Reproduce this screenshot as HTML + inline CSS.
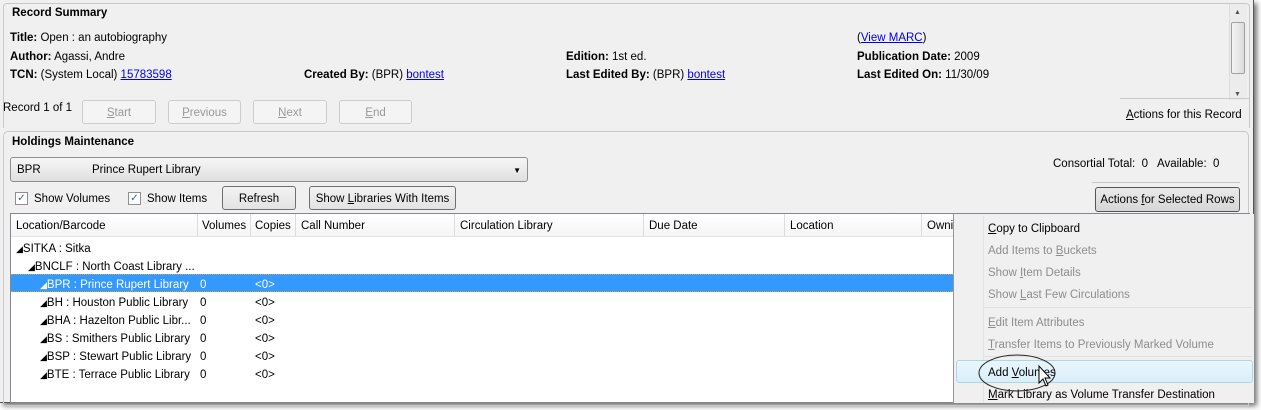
<!DOCTYPE html>
<html><head><style>
*{margin:0;padding:0;box-sizing:border-box}
body{width:1261px;height:410px;background:#fff;position:relative;overflow:hidden;font-family:"Liberation Sans",sans-serif;font-size:11.5px;color:#000}
.a{position:absolute;white-space:nowrap;line-height:17px}
#win{position:absolute;left:0;top:0;width:1254px;height:403px;background:#f0f0f0;box-shadow:3px 3px 5px rgba(0,0,0,.55);border-right:1px solid #555;border-bottom:1px solid #555}
b{font-weight:bold}
a{color:#00e;text-decoration:underline}
.btn{position:absolute;border:1px solid #adadad;border-radius:3px;background:linear-gradient(#f2f2f2,#e3e3e3);text-align:center;line-height:24px}
.dis{color:#999;border-color:#ccc;background:#f4f4f4}
.cb{position:absolute;width:13px;height:13px;border:1px solid #8f8f8f;background:#fff;font-size:10px;line-height:11px;text-align:center;color:#3a5f9f}
.hd{position:absolute;top:214px;height:22px;line-height:25px;border-right:1px solid #dcdcdc;padding-left:5px;background:linear-gradient(#fff,#f5f5f5)}
.row{position:absolute;left:11px;width:942px;height:18px;line-height:22px}
.mi{position:absolute;left:988px;color:#000}
.g{color:#8d8d8d}
u{text-decoration:underline}
</style></head><body>
<div id="win">
<div class="a" style="left:3px;top:3px;width:1247px;height:125px;border:1px solid #c8c8c8;border-bottom:none;border-radius:4px 4px 0 0"></div>
<div class="a" style="left:12px;top:5px;font-weight:bold">Record Summary</div>
<div class="a" style="left:1229px;top:4px;width:18px;height:96px;background:#ececec;border-left:1px solid #ddd"></div>
<div class="a" style="left:1231px;top:22px;width:14px;height:52px;border:1px solid #a0a0a0;border-radius:2px;background:linear-gradient(90deg,#f4f4f4,#dcdcdc)"></div>
<div class="a" style="left:1234px;top:4px;font-size:7px;color:#555">▲</div>
<div class="a" style="left:1234px;top:86px;font-size:7px;color:#555">▼</div>
<div class="a" style="left:10px;top:30px"><b>Title:</b> Open : an autobiography</div>
<div class="a" style="left:10px;top:49px"><b>Author:</b> Agassi, Andre</div>
<div class="a" style="left:10px;top:67px"><b>TCN:</b> (System Local) <a>15783598</a></div>
<div class="a" style="left:304px;top:67px"><b>Created By:</b> (BPR) <a>bontest</a></div>
<div class="a" style="left:566px;top:49px"><b>Edition:</b> 1st ed.</div>
<div class="a" style="left:566px;top:67px"><b>Last Edited By:</b> (BPR) <a>bontest</a></div>
<div class="a" style="left:857px;top:30px">(<a>View MARC</a>)</div>
<div class="a" style="left:857px;top:49px"><b>Publication Date:</b> 2009</div>
<div class="a" style="left:857px;top:67px"><b>Last Edited On:</b> 11/30/09</div>
<div class="a" style="left:3px;top:100px">Record 1 of 1</div>
<div class="btn dis" style="left:82px;top:100px;width:74px;height:24px"><u>S</u>tart</div>
<div class="btn dis" style="left:168px;top:100px;width:73px;height:24px"><u>P</u>revious</div>
<div class="btn dis" style="left:253px;top:100px;width:74px;height:24px"><u>N</u>ext</div>
<div class="btn dis" style="left:339px;top:100px;width:73px;height:24px"><u>E</u>nd</div>
<div class="a" style="left:1120px;top:98px;width:130px;border-top:1px solid #c8c8c8"></div>
<div class="a" style="left:1126px;top:107px"><u>A</u>ctions for this Record</div>
<div class="a" style="left:3px;top:131px;width:1246px;height:275px;border:1px solid #c8c8c8;border-radius:5px 5px 0 0"></div>
<div class="a" style="left:12px;top:134px;font-weight:bold">Holdings Maintenance</div>
<div class="a" style="left:10px;top:157px;width:518px;height:25px;border:1px solid #8e8f8f;border-radius:3px;background:linear-gradient(#f6f6f6,#e0e0e0);line-height:25px;padding-left:6px">BPR<span style="position:absolute;left:81px">Prince Rupert Library</span><span style="position:absolute;right:6px;font-size:8px">▼</span></div>
<div class="a" style="left:1053px;top:156px">Consortial Total:&nbsp; 0&nbsp;&nbsp; Available:&nbsp; 0</div>
<div class="cb" style="left:15px;top:192px">✓</div><div class="a" style="left:34px;top:191px">Show Volumes</div>
<div class="cb" style="left:128px;top:192px">✓</div><div class="a" style="left:147px;top:191px">Show Items</div>
<div class="btn" style="left:222px;top:186px;width:74px;height:24px;border-color:#707070">Refresh</div>
<div class="btn" style="left:309px;top:186px;width:147px;height:24px;border-color:#707070">Show <u>L</u>ibraries With Items</div>
<div class="a" style="left:1092px;top:182px;width:148px;border-top:1px solid #c8c8c8"></div>
<div class="btn" style="left:1095px;top:187px;width:145px;height:25px;border-color:#555;background:linear-gradient(#eaeaea,#d6d6d6)">Actions <u>f</u>or Selected Rows</div>
<div class="a" style="left:10px;top:213px;width:1240px;height:190px;background:#fff;border:1px solid #828790"></div>
<div class="hd" style="left:11px;width:187px">Location/Barcode</div>
<div class="hd" style="left:198px;width:53px;padding-left:4px">Volumes</div>
<div class="hd" style="left:251px;width:45px;padding-left:4px">Copies</div>
<div class="hd" style="left:296px;width:159px">Call Number</div>
<div class="hd" style="left:455px;width:189px">Circulation Library</div>
<div class="hd" style="left:644px;width:141px">Due Date</div>
<div class="hd" style="left:785px;width:137px">Location</div>
<div class="hd" style="left:922px;width:40px;border:none">Owni</div>
<div class="a" style="left:11px;top:236px;width:942px;border-top:1px solid #e3e3e3"></div>
<div class="row" style="top:238px;padding-left:5px"><span style="font-size:9px">◢</span>SITKA : Sitka</div>
<div class="row" style="top:256px;padding-left:17px"><span style="font-size:9px">◢</span>BNCLF : North Coast Library ...</div>
<div class="row" style="top:274px;background:#3399ff;color:#fff;border-top:1px dotted #c9a64a;border-bottom:1px dotted #c9a64a;line-height:20px;padding-left:29px"><span style="font-size:9px">◢</span>BPR : Prince Rupert Library<span style="position:absolute;left:189px">0</span><span style="position:absolute;left:244px">&lt;0&gt;</span></div>
<div class="row" style="top:292px;padding-left:29px"><span style="font-size:9px">◢</span>BH : Houston Public Library<span style="position:absolute;left:189px">0</span><span style="position:absolute;left:244px">&lt;0&gt;</span></div>
<div class="row" style="top:310px;padding-left:29px"><span style="font-size:9px">◢</span>BHA : Hazelton Public Libr...<span style="position:absolute;left:189px">0</span><span style="position:absolute;left:244px">&lt;0&gt;</span></div>
<div class="row" style="top:328px;padding-left:29px"><span style="font-size:9px">◢</span>BS : Smithers Public Library<span style="position:absolute;left:189px">0</span><span style="position:absolute;left:244px">&lt;0&gt;</span></div>
<div class="row" style="top:346px;padding-left:29px"><span style="font-size:9px">◢</span>BSP : Stewart Public Library<span style="position:absolute;left:189px">0</span><span style="position:absolute;left:244px">&lt;0&gt;</span></div>
<div class="row" style="top:364px;padding-left:29px"><span style="font-size:9px">◢</span>BTE : Terrace Public Library<span style="position:absolute;left:189px">0</span><span style="position:absolute;left:244px">&lt;0&gt;</span></div>
<div class="a" style="left:953px;top:214px;width:301px;height:189px;background:#f0f0f0;border-left:1px solid #979797"></div>
<div class="a" style="left:983px;top:216px;height:187px;border-left:1px solid #e2e3e3"></div>
<div class="a" style="left:984px;top:307px;width:268px;border-top:1px solid #e0e0e0"></div>
<div class="a" style="left:984px;top:356px;width:268px;border-top:1px solid #e0e0e0"></div>
<div class="a" style="left:956px;top:360px;width:297px;height:23px;border:1px solid #a8d8eb;border-radius:3px;background:linear-gradient(#eaf6fc,#d9eef8)"></div>
<div class="mi a" style="top:221px"><u>C</u>opy to Clipboard</div>
<div class="mi a g" style="top:243px">Add Items to <u>B</u>uckets</div>
<div class="mi a g" style="top:265px">Show <u>I</u>tem Details</div>
<div class="mi a g" style="top:287px">Show <u>L</u>ast Few Circulations</div>
<div class="mi a g" style="top:315px"><u>E</u>dit Item Attributes</div>
<div class="mi a g" style="top:337px"><u>T</u>ransfer Items to Previously Marked Volume</div>
<div class="mi a" style="top:365px">Add <u>V</u>olumes</div>
<div class="mi a" style="top:387px"><u>M</u>ark Library as Volume Transfer Destination</div>
<svg class="a" style="left:975px;top:352px;line-height:0" width="90" height="50"><ellipse cx="42" cy="21" rx="38" ry="18" fill="none" stroke="#222" stroke-width="1"/><path d="M64 14 L64 31 L68 27 L71 34 L73 33 L70 26 L75 26 Z" fill="#fff" stroke="#000" stroke-width="1"/></svg>
</div>
</body></html>
